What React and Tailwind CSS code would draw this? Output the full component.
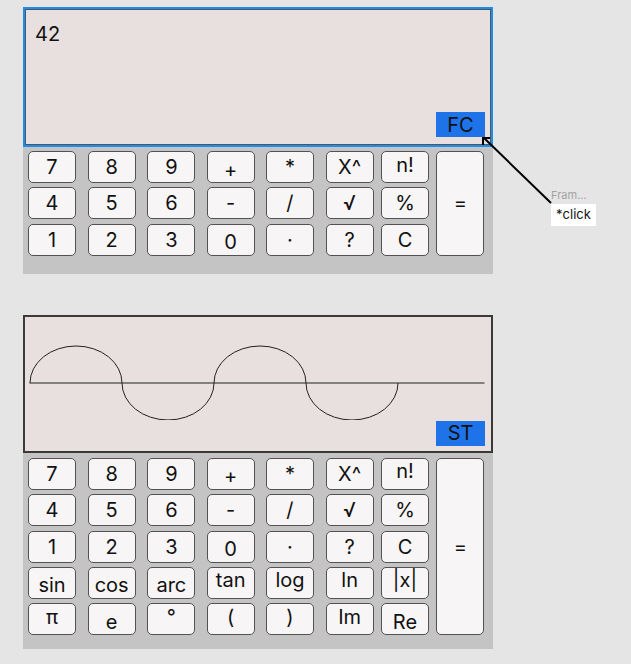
import React from "react";

const ROWS_BASIC = [
  ["7", "8", "9", "+", "*", "X^", "n!"],
  ["4", "5", "6", "-", "/", "√", "%"],
  ["1", "2", "3", "0", "·", "?", "C"],
];

const ROWS_SCI = [
  ["sin", "cos", "arc", "tan", "log", "ln", "|x|"],
  ["π", "e", "°", "(", ")", "Im", "Re"],
];

// nudges so glyphs sit like the mockup
const LOWER = ["+", "0", "e", "sin", "cos", "arc", "Re"];
const HIGHER = ["π", "°", "(", ")", "tan", "log", "ln", "Im", "n!", "|x|"];

function Key({ label, span }) {
  const nudge = LOWER.includes(label) ? "pt-[5px]" : HIGHER.includes(label) ? "pb-[5px]" : "";
  return (
    <div
      className={`flex w-[48px] items-center justify-center rounded-[5px] border border-[#525252] bg-[#f7f5f5] text-[20px] leading-none text-[#111] ${nudge} ${
        span || "h-[32px]"
      }`}
    >
      {label}
    </div>
  );
}

function Keypad({ rows, grid, span, className }) {
  return (
    <div className={`w-[470px] bg-[#c4c4c4] pl-[5px] ${className}`}>
      <div className={`grid grid-cols-[59.7px_59.7px_59.3px_59.3px_59.7px_55.3px_55.4px_48px] gap-y-[4.4px] ${grid}`}>
        <Key label="=" span={span} />
        {rows.map((row) => row.map((k) => <Key key={k} label={k} />))}
      </div>
    </div>
  );
}

function Wave() {
  return (
    <svg width="466" height="103" viewBox="0 0 466 103" className="shrink-0">
      <line x1="4.5" y1="66" x2="459.5" y2="66" stroke="#222" strokeWidth="1" />
      <path
        d="M5 66 A46 37 0 0 1 97 66 A46 37 0 0 0 189 66 A46 37 0 0 1 281 66 A46 37 0 0 0 373 66"
        fill="none"
        stroke="#222"
        strokeWidth="1"
      />
    </svg>
  );
}

export default function App() {
  return (
    <div className="relative h-[664px] w-[631px] overflow-hidden bg-[#e5e5e5] pl-[23px] pt-[7px] font-['Inter','Liberation_Sans',sans-serif]">
      {/* Frame 1: plain calculator */}
      <div className="flex h-[140px] w-[470px] flex-col justify-between border-2 border-[#1b8ef2] bg-[#e8dfdf] pb-[8px] pl-[10px] pr-[6px] pt-[13px] shadow-[inset_0_0_0_1px_#555]">
        <div className="text-[20px] leading-[24px] text-[#111]">42</div>
        <div className="flex h-[25px] w-[49px] items-center justify-center self-end bg-[#1e73e8] text-[20px] leading-none text-[#111]">
          FC
        </div>
      </div>
      <Keypad
        rows={ROWS_BASIC}
        grid="grid-rows-[32px_32px_32px]"
        span="col-start-8 row-start-1 row-span-3"
        className="pb-[18px] pt-[4px]"
      />

      {/* Frame 2: scientific calculator */}
      <div className="mt-[41px] flex h-[138px] w-[470px] flex-col border-2 border-[#3a3a3a] bg-[#e8dfdf] pb-[5px] pr-[6px]">
        <Wave />
        <div className="mt-auto flex h-[25px] w-[49px] items-center justify-center self-end bg-[#1e73e8] text-[20px] leading-none text-[#111]">
          ST
        </div>
      </div>
      <Keypad
        rows={[...ROWS_BASIC, ...ROWS_SCI]}
        grid="grid-rows-[32px_32px_32px_32px_32px]"
        span="col-start-8 row-start-1 row-span-5"
        className="pb-[14px] pt-[5px]"
      />

      {/* prototype connection annotation */}
      <svg className="pointer-events-none absolute left-0 top-0" width="631" height="664">
        <line x1="551" y1="203" x2="484" y2="138" stroke="#000" strokeWidth="2" />
        <polyline points="490,138 483,138 483,145" fill="none" stroke="#000" strokeWidth="2" />
      </svg>
      <div className="absolute left-[551px] top-[189px] text-[11px] leading-[13px] text-[#a3a3a3]">Fram...</div>
      <div className="absolute left-[551px] top-[204px] flex h-[22px] w-[45px] items-center justify-center bg-white text-[13px] text-[#111]">
        *click
      </div>
    </div>
  );
}
